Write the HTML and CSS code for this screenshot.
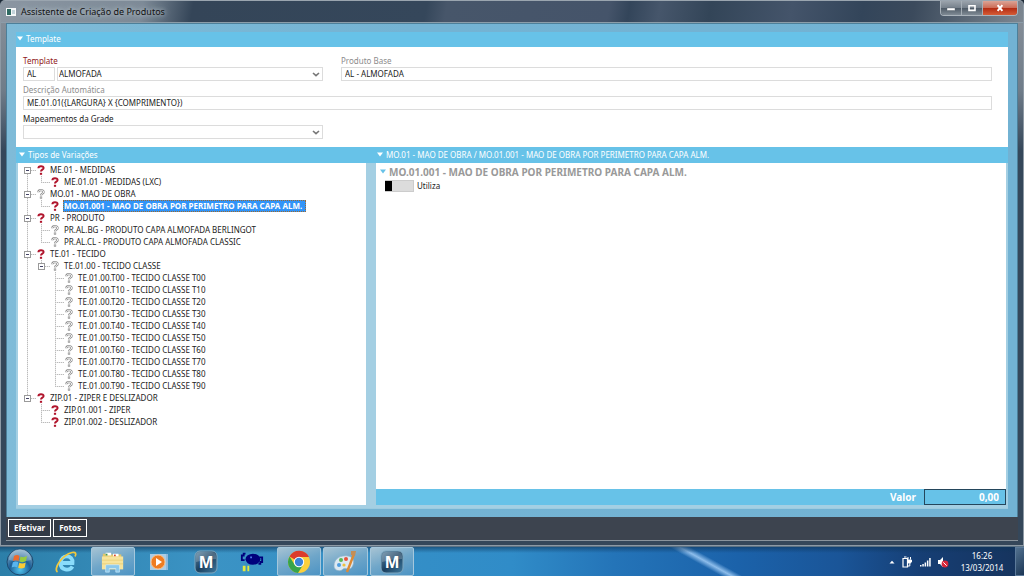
FILE: index.html
```
<!DOCTYPE html>
<html lang="pt-BR">
<head>
    <meta charset="UTF-8">
    <meta name="viewport" content="width=device-width, initial-scale=1.0">
    <title>Assistente de Criação de Produtos</title>
    <link rel="stylesheet" href="styles.css">
</head>
<body>
    <svg class="sprite" aria-hidden="true">
        <symbol id="ask" viewBox="0 0 8 10">
            <path d="M1.4 3.2C1.4 .6 6.6 .4 6.6 3C6.6 4.8 4 4.6 4 6.6" fill="none" stroke="#b0142c" stroke-width="2"/>
            <rect x="2.9" y="7.8" width="2.2" height="2" fill="#b0142c"/>
        </symbol>
        <symbol id="ask-off" viewBox="0 0 8 10">
            <path d="M1.4 3.2C1.4 .6 6.6 .4 6.6 3C6.6 4.8 4 4.6 4 6.6" fill="none" stroke="#8c8c8c" stroke-width="2.2"/>
            <path d="M1.4 3.2C1.4 .6 6.6 .4 6.6 3C6.6 4.8 4 4.6 4 6.6" fill="none" stroke="#fff" stroke-width=".9"/>
            <rect x="3.1" y="7.8" width="1.8" height="1.8" fill="#c4c4c4" stroke="#8c8c8c" stroke-width=".5"/>
        </symbol>
        <symbol id="arrow" viewBox="0 0 8 5">
            <path d="M1 .5H7L4 4.5Z" fill="currentColor"/>
        </symbol>
        <symbol id="chevron" viewBox="0 0 8 5">
            <path d="M1 1L4 3.7L7 1" fill="none" stroke="#777" stroke-width="1.6"/>
        </symbol>
        <defs>
            <linearGradient id="navy" x1="0" y1="0" x2="1" y2="1">
                <stop offset="0" stop-color="#5d87a3"/>
                <stop offset=".5" stop-color="#1b405f"/>
                <stop offset="1" stop-color="#3f7ba1"/>
            </linearGradient>
            <radialGradient id="orb" cx=".5" cy=".8" r=".8">
                <stop offset="0" stop-color="#4fc4ee"/>
                <stop offset=".5" stop-color="#1d5f96"/>
                <stop offset="1" stop-color="#8fb4cc"/>
            </radialGradient>
        </defs>
    </svg>

    <div class="window">
        <header class="titlebar">
            <svg class="app-icon" viewBox="0 0 10 8"><path d="M0 0H10V8H0Z" fill="#f4f7f8"/><path d="M1 1H5V7H1Z" fill="#2f6a62"/><path d="M6 2H9V6H6Z" fill="#c3d3da"/></svg>
            <h1>Assistente de Criação de Produtos</h1>
            <div class="window-buttons">
                <button aria-label="Minimizar"><svg viewBox="0 0 10 8"><rect x="1" y="4" width="8" height="2.5" fill="#fff" stroke="#555e68" stroke-width=".4"/></svg></button>
                <button aria-label="Maximizar"><svg viewBox="0 0 10 8"><path d="M2 1.8H8V6.4H2Z" fill="none" stroke="#fff" stroke-width="1.6"/></svg></button>
                <button class="close" aria-label="Fechar"><svg viewBox="0 0 10 8"><path d="M2.6 1.2L7.4 6.8M7.4 1.2L2.6 6.8" stroke="#fff" stroke-width="2"/></svg></button>
            </div>
        </header>

        <main class="client">
            <section class="template">
                <h2 class="bar"><svg class="arrow"><use href="#arrow"/></svg>Template</h2>
                <form class="fields">
                    <div class="field required">
                        <label for="template">Template</label>
                        <div class="pair">
                            <input id="template" value="AL">
                            <div class="select">
                                <select aria-label="Nome do template"><option>ALMOFADA</option></select>
                                <svg><use href="#chevron"/></svg>
                            </div>
                        </div>
                    </div>
                    <div class="field readonly">
                        <label for="base">Produto Base</label>
                        <input id="base" value="AL - ALMOFADA" readonly>
                    </div>
                    <div class="field readonly wide">
                        <label for="descricao">Descrição Automática</label>
                        <input id="descricao" value="ME.01.01({LARGURA} X {COMPRIMENTO})" readonly>
                    </div>
                    <div class="field">
                        <label for="grade">Mapeamentos da Grade</label>
                        <div class="select">
                            <select id="grade"><option></option></select>
                            <svg><use href="#chevron"/></svg>
                        </div>
                    </div>
                </form>
            </section>

            <div class="panels">
                <section class="variations">
                    <h2 class="bar"><svg class="arrow"><use href="#arrow"/></svg>Tipos de Variações</h2>
                    <ul class="tree">
                        <li>
                            <div class="node"><button class="toggle" aria-label="Recolher"></button><svg><use href="#ask"/></svg><span>ME.01 - MEDIDAS</span></div>
                            <ul>
                                <li><div class="node leaf"><svg><use href="#ask"/></svg><span>ME.01.01 - MEDIDAS (LXC)</span></div></li>
                            </ul>
                        </li>
                        <li>
                            <div class="node"><button class="toggle" aria-label="Recolher"></button><svg><use href="#ask-off"/></svg><span>MO.01 - MAO DE OBRA</span></div>
                            <ul>
                                <li><div class="node leaf"><svg><use href="#ask"/></svg><span class="selected">MO.01.001 - MAO DE OBRA POR PERIMETRO PARA CAPA ALM.</span></div></li>
                            </ul>
                        </li>
                        <li>
                            <div class="node"><button class="toggle" aria-label="Recolher"></button><svg><use href="#ask"/></svg><span>PR - PRODUTO</span></div>
                            <ul>
                                <li><div class="node leaf"><svg><use href="#ask-off"/></svg><span>PR.AL.BG - PRODUTO CAPA ALMOFADA BERLINGOT</span></div></li>
                                <li><div class="node leaf"><svg><use href="#ask-off"/></svg><span>PR.AL.CL - PRODUTO CAPA ALMOFADA CLASSIC</span></div></li>
                            </ul>
                        </li>
                        <li>
                            <div class="node"><button class="toggle" aria-label="Recolher"></button><svg><use href="#ask"/></svg><span>TE.01 - TECIDO</span></div>
                            <ul>
                                <li>
                                    <div class="node"><button class="toggle" aria-label="Recolher"></button><svg><use href="#ask-off"/></svg><span>TE.01.00 - TECIDO CLASSE</span></div>
                                    <ul>
                                        <li><div class="node leaf"><svg><use href="#ask-off"/></svg><span>TE.01.00.T00 - TECIDO CLASSE T00</span></div></li>
                                        <li><div class="node leaf"><svg><use href="#ask-off"/></svg><span>TE.01.00.T10 - TECIDO CLASSE T10</span></div></li>
                                        <li><div class="node leaf"><svg><use href="#ask-off"/></svg><span>TE.01.00.T20 - TECIDO CLASSE T20</span></div></li>
                                        <li><div class="node leaf"><svg><use href="#ask-off"/></svg><span>TE.01.00.T30 - TECIDO CLASSE T30</span></div></li>
                                        <li><div class="node leaf"><svg><use href="#ask-off"/></svg><span>TE.01.00.T40 - TECIDO CLASSE T40</span></div></li>
                                        <li><div class="node leaf"><svg><use href="#ask-off"/></svg><span>TE.01.00.T50 - TECIDO CLASSE T50</span></div></li>
                                        <li><div class="node leaf"><svg><use href="#ask-off"/></svg><span>TE.01.00.T60 - TECIDO CLASSE T60</span></div></li>
                                        <li><div class="node leaf"><svg><use href="#ask-off"/></svg><span>TE.01.00.T70 - TECIDO CLASSE T70</span></div></li>
                                        <li><div class="node leaf"><svg><use href="#ask-off"/></svg><span>TE.01.00.T80 - TECIDO CLASSE T80</span></div></li>
                                        <li><div class="node leaf"><svg><use href="#ask-off"/></svg><span>TE.01.00.T90 - TECIDO CLASSE T90</span></div></li>
                                    </ul>
                                </li>
                            </ul>
                        </li>
                        <li>
                            <div class="node"><button class="toggle" aria-label="Recolher"></button><svg><use href="#ask"/></svg><span>ZIP.01 - ZIPER E DESLIZADOR</span></div>
                            <ul>
                                <li><div class="node leaf"><svg><use href="#ask"/></svg><span>ZIP.01.001 - ZIPER</span></div></li>
                                <li><div class="node leaf"><svg><use href="#ask"/></svg><span>ZIP.01.002 - DESLIZADOR</span></div></li>
                            </ul>
                        </li>
                    </ul>
                </section>

                <section class="detail">
                    <h2 class="bar"><svg class="arrow"><use href="#arrow"/></svg>MO.01 - MAO DE OBRA / MO.01.001 - MAO DE OBRA POR PERIMETRO PARA CAPA ALM.</h2>
                    <div class="detail-body">
                        <h3><svg class="arrow"><use href="#arrow"/></svg>MO.01.001 - MAO DE OBRA POR PERIMETRO PARA CAPA ALM.</h3>
                        <label class="switch"><input type="checkbox">Utiliza</label>
                    </div>
                    <div class="total">
                        <label for="valor">Valor</label>
                        <input id="valor" value="0,00" readonly>
                    </div>
                </section>
            </div>
        </main>

        <footer class="actions">
            <button>Efetivar</button>
            <button>Fotos</button>
        </footer>
    </div>

    <div class="taskbar">
        <button class="start" aria-label="Iniciar">
            <svg viewBox="0 0 28 28">
                <circle cx="14" cy="14" r="13" fill="url(#orb)" stroke="#1c4a70"/>
                <path d="M3 12A11 11 0 0 1 25 12Q14 15 3 12Z" fill="#fff" opacity=".25"/>
                <path d="M8 8Q11 6 13.500 8L12.500 13Q10 11.500 7 13Z" fill="#ee6a2c"/>
                <path d="M14.500 8.500Q17.500 10 21 8L20 13Q17 15 13.500 13.500Z" fill="#98cc3e"/>
                <path d="M6.800 14.200Q9.800 12.600 12.300 14.300L11.200 19.300Q8.500 18 5.700 19.500Z" fill="#58b4ee"/>
                <path d="M13.300 14.800Q16.500 16.200 19.700 14.400L18.700 19.500Q15.500 21.300 12.200 19.800Z" fill="#fccb35"/>
            </svg>
        </button>
        <nav class="apps">
            <button aria-label="Internet Explorer">
                <svg viewBox="0 0 24 24">
                    <path d="M7 13H18.500C19.500 4.500 7 4 6.500 13C6.500 20.500 15.500 21.500 18.500 16.500" fill="none" stroke="#8adcfb" stroke-width="3.800"/>
                    <path d="M3.500 22C-1 19 8 5 18 2.500C22 1.600 22.500 4 21 6.500" fill="none" stroke="#f2c83c" stroke-width="1.700"/>
                </svg>
            </button>
            <button class="running" aria-label="Windows Explorer">
                <svg viewBox="0 0 26 24">
                    <path d="M2 3H9L10 4H22V19H2Z" fill="#e5c767"/>
                    <path d="M5 2H11V5H5ZM13 3H19V6H13Z" fill="#fff"/>
                    <path d="M5 3H7V5H5Z" fill="#4a9a4d"/><path d="M14 4H16V6H14Z" fill="#d9472e"/>
                    <path d="M1 6H24V20H1Z" fill="#f7e49c"/>
                    <path d="M1 10H24M1 14H24" stroke="#ead07a"/>
                    <path d="M5 23V16Q5 15 6 15H19Q20 15 20 16V23H16V19H9V23Z" fill="#8cc9ec" stroke="#d9f1ff" stroke-width=".6"/>
                </svg>
            </button>
            <button aria-label="Windows Media Player">
                <svg viewBox="0 0 24 24">
                    <path d="M7 4H21V20H7Z" fill="#8db9dc"/><path d="M3 4H19V20H3Z" fill="#a9cde6"/>
                    <circle cx="11" cy="12" r="7" fill="#ee7c21" stroke="#f9c28f"/>
                    <path d="M9 8L15 12L9 16Z" fill="#fff"/>
                </svg>
            </button>
            <button>
                <svg viewBox="0 0 24 24">
                    <rect x="1" y="1" width="22" height="22" rx="5" fill="url(#navy)" stroke="#7fa6bd"/>
                    <path d="M2 12V6Q2 2 6 2H18Q22 2 22 6V9Q12 9 2 12Z" fill="#fff" opacity=".22"/>
                    <text class="letter" x="12" y="18">M</text>
                </svg>
            </button>
            <button aria-label="Inseto">
                <svg viewBox="0 0 26 24">
                    <ellipse cx="14" cy="9" rx="8" ry="6" fill="#00007c"/>
                    <path d="M6 3H4V5H2V10H5M21 7H24V12H22V14H20" fill="none" stroke="#00007c" stroke-width="2"/>
                    <path d="M11 6H13V8H11Z" fill="#4a78ea"/>
                    <path d="M3 16H6V22H3ZM8 16H10V22H8Z" fill="#e4e93a"/>
                </svg>
            </button>
            <button class="running" aria-label="Google Chrome">
                <svg viewBox="0 0 24 24">
                    <circle cx="12" cy="12" r="11" fill="#fbd03b"/>
                    <path d="M12 12L2.500 6.500A11 11 0 0 1 22 7H12Z" fill="#dc3b2c"/>
                    <path d="M12 12L7.500 14.500L2.500 6.500A11 11 0 0 0 11 23L16 15Z" fill="#37a44b"/>
                    <circle cx="12" cy="12" r="5.200" fill="#fff"/><circle cx="12" cy="12" r="4.200" fill="#3b84d8"/>
                </svg>
            </button>
            <button class="running" aria-label="Paint">
                <svg viewBox="0 0 24 24">
                    <path d="M1 16C1 8 8 5 15 6C21 7 22 12 19 17C17 21 12 17 10 19C8 22 1 21 1 16Z" fill="#dce9f2" stroke="#8fb2c9" stroke-width=".7"/>
                    <circle cx="6" cy="15" r="2" fill="#4f9ce0"/><circle cx="8" cy="10" r="2" fill="#5cb753"/><circle cx="13" cy="9" r="2" fill="#e5533c"/><circle cx="11" cy="15" r="1.600" fill="#efc03c"/>
                    <path d="M21 4L14 22" stroke="#dc8a35" stroke-width="2.400"/><path d="M18 1L23 1L22 6L18 5Z" fill="#c48e56"/>
                </svg>
            </button>
            <button class="running">
                <svg viewBox="0 0 24 24">
                    <rect x="1" y="1" width="22" height="22" rx="5" fill="url(#navy)" stroke="#7fa6bd"/>
                    <path d="M2 12V6Q2 2 6 2H18Q22 2 22 6V9Q12 9 2 12Z" fill="#fff" opacity=".22"/>
                    <text class="letter" x="12" y="18">M</text>
                </svg>
            </button>
        </nav>
        <div class="tray">
            <svg viewBox="0 0 6 4"><path d="M.5 3.500H5.500L3 .8Z" fill="#fff"/></svg>
            <svg viewBox="0 0 12 12"><path d="M2 2.500H6.500V11H2ZM3 1H5.500" fill="none" stroke="#fff" stroke-width="1.200"/><path d="M7 1V3.500M9.500 1V3.500M6 4H10.500V6L8.800 7.500V10H6" fill="none" stroke="#fff"/><path d="M6 4H10.500V6L9 7.500H7.500L6 6Z" fill="#fff"/></svg>
            <svg viewBox="0 0 12 12"><path d="M1 9H2.500V10.500H1ZM3.300 8H4.800V10.500H3.300ZM5.600 6.500H7.100V10.500H5.600ZM7.900 4.500H9.400V10.500H7.900ZM10.200 2H11.700V10.500H10.200Z" fill="#fff"/></svg>
            <svg viewBox="0 0 12 12"><path d="M1 4H3L6 1V11L3 8H1Z" fill="#fff"/><circle cx="8" cy="8" r="3.400" fill="#d8273a"/><path d="M6.300 6.300L9.700 9.700" stroke="#fff"/></svg>
        </div>
        <time class="clock" datetime="2014-03-13T16:26">16:26<br>13/03/2014</time>
        <button class="show-desktop" aria-label="Mostrar área de trabalho"></button>
    </div>
</body>
</html>
```
FILE: styles.css
```
* {
    box-sizing: border-box;
}

body {
    display: flex;
    flex-direction: column;
    min-height: 100vh;
    margin: 0;
    font-family: "Noto Sans", "Open Sans", sans-serif;
    font-size: 8px;
    line-height: 12px;
    color: #222;
    background-color: #1d2a38;
}

h1, h2, h3, ul {
    margin: 0;
    padding: 0;
    font-size: 8px;
    font-weight: normal;
}

button, input, select {
    margin: 0;
    padding: 0;
    border: none;
    border-radius: 0;
    font: inherit;
    color: inherit;
}

.sprite {
    display: block;
    width: 0;
    height: 0;
}

/* window frame */
.window {
    flex: 1;
    display: flex;
    flex-direction: column;
    padding: 0 5px 4px;
    border: 1px solid #8d99a4;
    border-top: 1px solid #9aa5af;
    border-radius: 5px 5px 0 0;
    background: linear-gradient(#8a929b, #6f7c89 90px, #35475a 150px, #35475a);
}

.titlebar {
    display: flex;
    align-items: center;
    gap: 5px;
    height: 22px;
    margin: 0 -5px;
    padding-left: 5px;
    border-bottom: 1px solid #8c9da9;
    border-radius: 4px 4px 0 0;
    background: linear-gradient(100deg, #8b96a2 0, #7d8a97 140px, #344558 190px, #35475b 420px, #47566a 440px, #45546a 600px, #33455a 620px, #46566b 650px, #334558 700px, #44546a 780px, #33455a 850px, #3b4a5c 900px, #7d8791);
}

.titlebar h1 {
    font-size: 9px;
    line-height: 20px;
    color: #111;
    text-shadow: 0 0 6px #b6c0ca, 0 0 4px #b6c0ca;
}

.app-icon {
    width: 10px;
    height: 8px;
}

.window-buttons {
    display: flex;
    align-self: flex-start;
    margin: 0 5px 0 auto;
    border: 1px solid #aab3bb;
    border-top: none;
    border-radius: 0 0 4px 4px;
    overflow: hidden;
}

.window-buttons button {
    display: grid;
    place-items: center;
    width: 21px;
    height: 14px;
    border-right: 1px solid #a5aeb6;
    background: linear-gradient(#9ba3ab, #75808b 50%, #4d5965 50%, #808b95);
}

.window-buttons svg {
    width: 10px;
    height: 8px;
}

.window-buttons .close {
    width: 34px;
    border-right: none;
    background: linear-gradient(#dba496, #cc6a54 50%, #b22a12 50%, #d55c36);
}

.client {
    flex: 1;
    display: flex;
    flex-direction: column;
    padding: 8px 9px;
    border: 1px solid #4d7f99;
    border-bottom: none;
    background: linear-gradient(90deg, #7fbbd8, #74b3d3 40%, #72b2d3);
}

.bar {
    display: flex;
    align-items: center;
    gap: 2px;
    height: 15px;
    padding-bottom: 2px;
    color: #fff;
    background-color: #67c2e8;
}

.arrow {
    width: 8px;
    height: 5px;
}

/* template form */
.fields {
    display: grid;
    grid-template-columns: 300px 1fr;
    gap: 3px 18px;
    padding: 8px 16px 8px 7px;
    background-color: #fff;
}

.field {
    display: flex;
    flex-direction: column;
}

.field label {
    height: 12px;
    color: #222;
}

.required label {
    color: #8f1818;
}

.readonly label {
    color: #8c8c8c;
}

.wide {
    grid-column: 1 / -1;
}

.field input, .select {
    height: 14px;
    border: 1px solid #dcdcdc;
    background-color: #fff;
}

.field input {
    padding: 0 3px 1px;
}

.pair {
    display: grid;
    grid-template-columns: 32px 1fr;
    gap: 2px;
}

.pair input {
    width: 100%;
}

.select {
    display: grid;
    align-items: center;
}

.select select {
    grid-area: 1 / 1;
    width: 100%;
    height: 12px;
    padding: 0 1px;
    appearance: none;
    background: none;
}

.select svg {
    grid-area: 1 / 1;
    justify-self: end;
    width: 8px;
    height: 5px;
    margin-right: 2px;
    pointer-events: none;
}

/* lower panels */
.panels {
    flex: 1;
    display: grid;
    grid-template-columns: 348fr 630fr;
    gap: 10px;
    padding: 1px 2px 3px;
    border-bottom: 1px solid #9ccbe0;
    background: linear-gradient(#67c2e8 16px, #a4cfe3 16px);
}

.variations, .detail {
    display: flex;
    flex-direction: column;
    background-color: #fff;
}

.tree {
    padding: 1px 5px;
}

.tree ul {
    margin-left: 14px;
}

/* dotted guide lines: one down the level, one across to the icon */
.tree li {
    list-style: none;
    background-image: repeating-linear-gradient(#bbb 0 1px, #e8e8e8 1px 2px), repeating-linear-gradient(90deg, #bbb 0 1px, #e8e8e8 1px 2px);
    background-position: 4px 0, 4px 6px;
    background-size: 1px 100%, 9px 1px;
    background-repeat: no-repeat;
}

.tree li:last-child {
    background-size: 1px 6px, 9px 1px;
}

.tree > li:first-child {
    background-position: 4px 6px;
}

.node {
    display: flex;
    align-items: center;
    height: 12px;
}

.node svg {
    width: 8px;
    height: 10px;
    margin-right: 4px;
}

.leaf {
    padding-left: 14px;
}

.node span {
    padding: 0 1px;
    white-space: nowrap;
}

.node .selected {
    padding-right: 4px;
    outline: 1px dotted #a06a2c;
    outline-offset: -1px;
    font-weight: bold;
    color: #fff;
    background-color: #3294f7;
}

.toggle {
    width: 7px;
    height: 7px;
    margin: 0 6px 0 1px;
    border: 1px solid #9a9a9a;
    background: linear-gradient(#446, #446) center / 3px 1px no-repeat #fff;
}

.detail-body {
    flex: 1;
    padding: 1px 3px;
}

.detail h3 {
    display: flex;
    align-items: center;
    gap: 2px;
    height: 15px;
    font-size: 10px;
    font-weight: bold;
    color: #999;
}

.detail h3 .arrow {
    color: #67c2e8;
}

.switch {
    display: flex;
    align-items: center;
    gap: 3px;
    height: 14px;
    padding-left: 6px;
}

/* the inset shadow is the knob */
.switch input {
    width: 29px;
    height: 12px;
    border: 1px solid #ccc;
    border-left: none;
    box-shadow: inset 7px 0 #000;
    appearance: none;
    background-color: #dcdcdc;
}

.total {
    display: flex;
    align-items: center;
    justify-content: flex-end;
    gap: 8px;
    height: 16px;
    font-size: 10px;
    font-weight: bold;
    color: #fff;
    background-color: #67c2e8;
}

.total input {
    width: 82px;
    height: 16px;
    padding-right: 6px;
    border: 1px solid #24465c;
    text-align: right;
    background-color: #67c2e8;
}

.actions {
    display: flex;
    gap: 2px;
    height: 24px;
    padding: 2px;
    border-bottom: 1px solid #8a949d;
    background-color: #3d444f;
}

.actions button {
    height: 18px;
    padding: 0 5px;
    border: 1px solid #fff;
    font-weight: bold;
    color: #fff;
    background-color: #333a45;
}

/* taskbar */
.taskbar {
    display: flex;
    height: 30px;
    border-top: 1px solid #5b7285;
    color: #fff;
    background: linear-gradient(#0d355a99, transparent 6px), linear-gradient(29deg, transparent 67%, #8dbdeb 68%, transparent 69%), linear-gradient(90deg, #2c7fa9, #3b93c4 20%, #308cc8 50%, #2474b8 60%, #1b62aa 72%, #1a5598 82%, #163e74 90%, #16335c);
}

.taskbar button {
    display: grid;
    place-items: center;
    background: none;
}

.taskbar .start {
    width: 44px;
    padding-right: 4px;
}

.start svg {
    width: 28px;
    height: 28px;
}

.apps {
    display: grid;
    grid-template-columns: repeat(8, 1fr);
    gap: 2px;
    width: 370px;
}

.apps svg {
    width: 24px;
    height: 24px;
}

.letter {
    font: bold 17px "Liberation Sans", sans-serif;
    text-anchor: middle;
    fill: #fff;
}

.taskbar .running {
    border: 1px solid #a5c7dc;
    border-radius: 2px;
    background: linear-gradient(160deg, #a6c3d3, #6fa6c9 50%, #4d94c4);
}

.tray {
    display: flex;
    align-items: center;
    gap: 6px;
    margin-left: auto;
}

.tray svg {
    width: 12px;
    height: 12px;
}

.tray svg:first-child {
    width: 6px;
    height: 4px;
}

.clock {
    align-self: center;
    width: 66px;
    text-align: center;
}

.taskbar .show-desktop {
    width: 9px;
    border: 1px solid #5c7a9a;
    border-right: none;
    background: linear-gradient(135deg, #52718f, #1b3655);
}
```
